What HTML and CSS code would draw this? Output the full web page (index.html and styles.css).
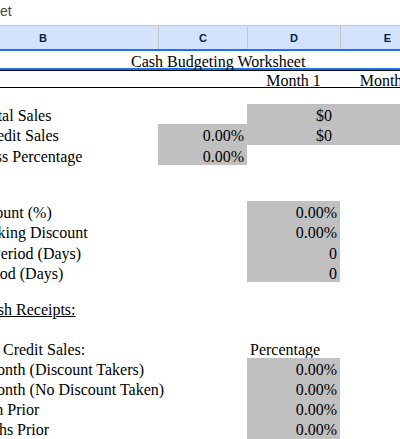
FILE: index.html
```html
<!DOCTYPE html>
<html lang="en">
<head>
<meta charset="utf-8">
<title>Cash Budgeting Worksheet</title>
<link rel="stylesheet" href="styles.css">
</head>
<body>
<div class="topbar"><span class="doc-title">et</span></div>
<div class="viewport">
  <div class="sheet">
    <div class="colhead">
      <div class="ch">B</div>
      <div class="ch sep">C</div>
      <div class="ch sep">D</div>
      <div class="ch sep">E</div>
    </div>

    <div class="row title-row">
      <div class="cell title">Cash Budgeting Worksheet</div>
    </div>

    <div class="row month-row">
      <div class="cell"></div>
      <div class="cell"></div>
      <div class="cell ctr">Month 1</div>
      <div class="cell ctr">Month 2</div>
    </div>

    <div class="gap16"></div>

    <div class="row">
      <div class="cell ind">Total Sales</div>
      <div class="cell"></div>
      <div class="cell g cur">$0</div>
      <div class="cell g cur">$0</div>
    </div>
    <div class="row h21">
      <div class="cell ind">Credit Sales</div>
      <div class="cell g num">0.00%</div>
      <div class="cell g cur">$0</div>
      <div class="cell g cur">$0</div>
    </div>
    <div class="row">
      <div class="cell ind-loss">Loss Percentage</div>
      <div class="cell g num">0.00%</div>
      <div class="cell"></div>
      <div class="cell"></div>
    </div>

    <div class="gap36"></div>

    <div class="row">
      <div class="cell lbl">Cash Discount (%)</div>
      <div class="cell"></div>
      <div class="cell g num">0.00%</div>
      <div class="cell"></div>
    </div>
    <div class="row h21">
      <div class="cell lbl">Percent Taking Discount</div>
      <div class="cell"></div>
      <div class="cell g num">0.00%</div>
      <div class="cell"></div>
    </div>
    <div class="row">
      <div class="cell lbl">Discount Period (Days)</div>
      <div class="cell"></div>
      <div class="cell g num">0</div>
      <div class="cell"></div>
    </div>
    <div class="row">
      <div class="cell lbl">Credit Period (Days)</div>
      <div class="cell"></div>
      <div class="cell g num">0</div>
      <div class="cell"></div>
    </div>

    <div class="gap16"></div>

    <div class="row">
      <div class="cell receipts"><span class="ul">Cash Receipts:</span></div>
    </div>

    <div class="gap20"></div>

    <div class="row">
      <div class="cell credit">Credit Sales:</div>
      <div class="cell"></div>
      <div class="cell left">Percentage</div>
      <div class="cell"></div>
    </div>
    <div class="row">
      <div class="cell lbl">Current Month (Discount Takers)</div>
      <div class="cell"></div>
      <div class="cell g num">0.00%</div>
      <div class="cell"></div>
    </div>
    <div class="row">
      <div class="cell lbl">Current Month (No Discount Taken)</div>
      <div class="cell"></div>
      <div class="cell g num">0.00%</div>
      <div class="cell"></div>
    </div>
    <div class="row">
      <div class="cell lbl">One Month Prior</div>
      <div class="cell"></div>
      <div class="cell g num">0.00%</div>
      <div class="cell"></div>
    </div>
    <div class="row h21">
      <div class="cell lbl-two">Two Months Prior</div>
      <div class="cell"></div>
      <div class="cell g num">0.00%</div>
      <div class="cell"></div>
    </div>
  </div>
</div>
</body>
</html>
```

FILE: styles.css
```css
html, body {
  margin: 0;
  padding: 0;
  background: #ffffff;
}

body {
  width: 400px;
  height: 439px;
  overflow: hidden;
  font-family: "Liberation Serif", "Times New Roman", serif;
  color: #000000;
}

.topbar {
  height: 25px;
  box-sizing: border-box;
  padding-top: 2px;
  font-family: "Liberation Sans", Arial, sans-serif;
  font-size: 14px;
  line-height: 18px;
  color: #444746;
}

.viewport {
  width: 400px;
  overflow: hidden;
}

.sheet {
  margin-left: -72px;
  width: 506px;
}

.colhead {
  display: grid;
  grid-template-columns: 230px 89px 93px 94px;
  height: 24px;
  box-sizing: border-box;
  border-top: 1px solid #c4c7c5;
  background: #d3e3fd;
  font-family: "Liberation Sans", Arial, sans-serif;
  font-size: 11px;
  font-weight: bold;
  color: #041e49;
}

.ch {
  display: flex;
  align-items: center;
  justify-content: center;
}

.sep {
  border-left: 1px solid #c4c7c5;
}

.row {
  display: grid;
  grid-template-columns: 230px 89px 93px 94px;
  grid-template-rows: 100%;
  height: 20px;
  line-height: 20px;
  font-size: 16px;
}

.h21 {
  height: 21px;
}

.cell {
  white-space: nowrap;
  min-width: 0;
  min-height: 0;
  height: 100%;
  box-sizing: border-box;
  padding-top: 2px;
}

.title-row {
  height: 21px;
  box-sizing: border-box;
  border-top: 2px solid #1a73e8;
  border-bottom: 2px solid #1a73e8;
  line-height: 17px;
}

.title {
  grid-column: 1 / -1;
  padding-left: 203px;
}

.month-row {
  height: 18px;
  box-sizing: border-box;
  border-top: 1px solid #000000;
  border-bottom: 1px solid #000000;
  line-height: 16px;
}

.gap16 { height: 16px; }
.gap20 { height: 20px; }
.gap36 { height: 36px; }

.g { background: #c0c0c0; }

.num {
  text-align: right;
  padding-right: 3px;
}

.cur {
  text-align: right;
  padding-right: 8px;
}

.ctr { text-align: center; }

.left { padding-left: 3px; }

.lbl { padding-left: 2px; }

.lbl-two { padding-left: 4px; }

.ind { padding-left: 53px; }

.ind-loss { padding-left: 50px; }

.receipts {
  grid-column: 1 / -1;
  padding-left: 52px;
}

.ul { text-decoration: underline; }

.credit { padding-left: 75px; }
```
